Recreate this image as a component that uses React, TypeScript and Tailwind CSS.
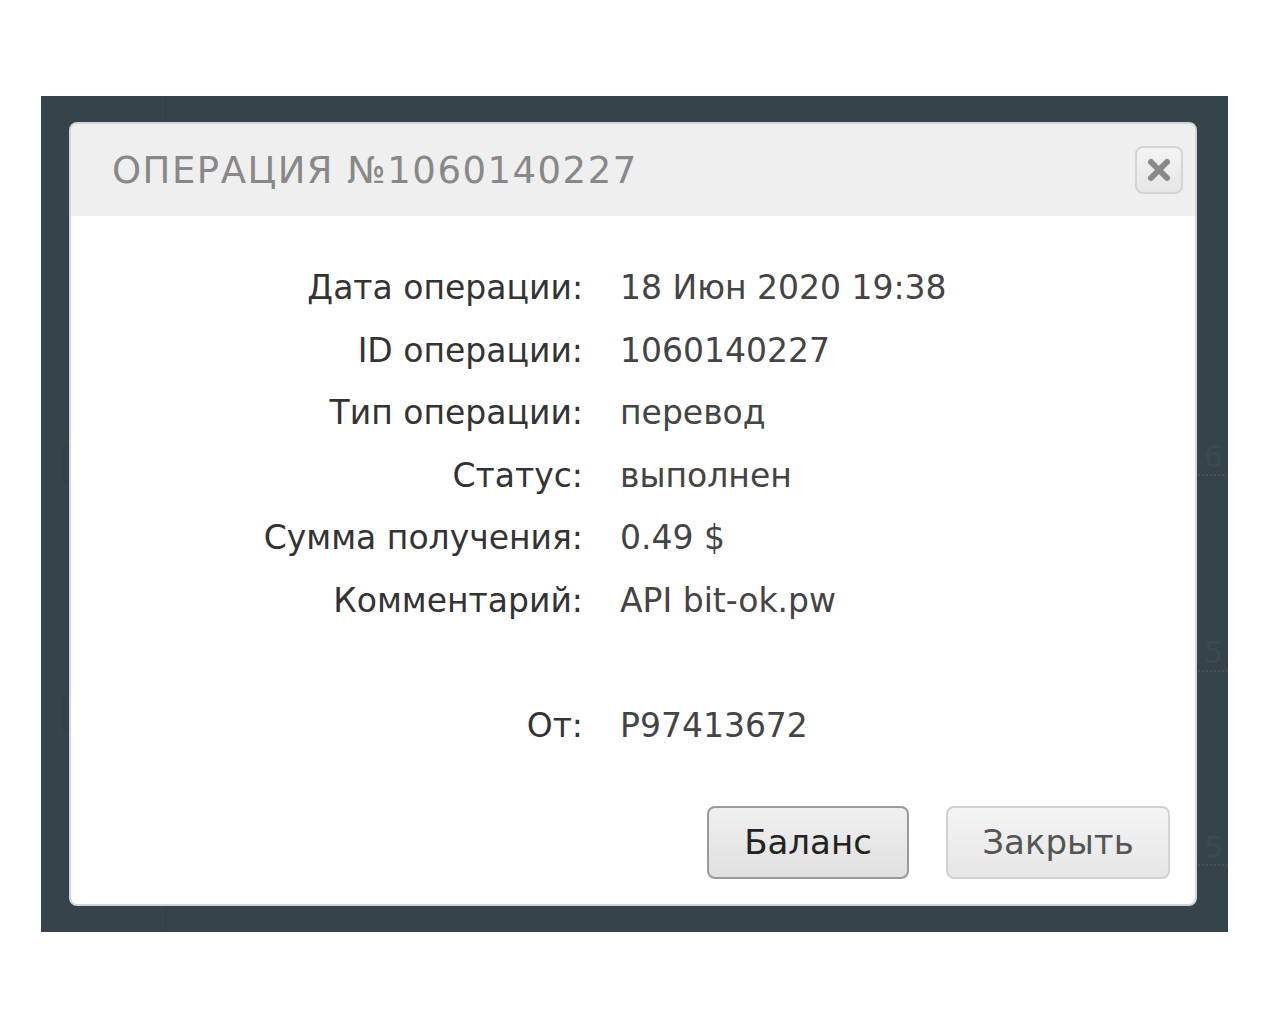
import React from 'react'

const rows: [string, string][] = [
  ['Дата операции:', '18 Июн 2020 19:38'],
  ['ID операции:', '1060140227'],
  ['Тип операции:', 'перевод'],
  ['Статус:', 'выполнен'],
  ['Сумма получения:', '0.49 $'],
  ['Комментарий:', 'API bit-ok.pw'],
]

const CloseIcon = () => (
  <svg width="26" height="26" viewBox="0 0 26 26">
    <path d="M5 5 L21 21 M21 5 L5 21" stroke="#8a8a8a" strokeWidth="6" strokeLinecap="round" />
  </svg>
)

export default function App() {
  return (
    <div className="min-h-[1024px] bg-white pt-[96px] pl-[41px]" style={{ fontFamily: '"DejaVu Sans", sans-serif' }}>
      <div className="relative w-[1187px] h-[836px] bg-[#37434b] pt-[26px] pl-[28px] overflow-hidden">
        {/* faint page content behind the overlay */}
        <div className="absolute left-[124px] top-0 w-[2px] h-full bg-[#33404a]" />
        <div className="absolute left-[22px] top-[350px] w-[12px] h-[38px] bg-[#33404a]" />
        <div className="absolute left-[22px] top-[600px] w-[12px] h-[38px] bg-[#33404a]" />
        <div className="absolute left-[1140px] top-[338px] text-[30px] text-[#3d4951] tracking-[4px]">06</div>
        <div className="absolute left-[1140px] top-[378px] w-[47px] border-t-2 border-dotted border-[#435058]" />
        <div className="absolute left-[1140px] top-[534px] text-[30px] text-[#3d4951] tracking-[4px]">05</div>
        <div className="absolute left-[1140px] top-[574px] w-[47px] border-t-2 border-dotted border-[#435058]" />
        <div className="absolute left-[1140px] top-[729px] text-[30px] text-[#3d4951] tracking-[4px]">05</div>
        <div className="absolute left-[1140px] top-[768px] w-[47px] border-t-2 border-dotted border-[#435058]" />

        <div className="relative w-[1128px] h-[784px] bg-white rounded-[8px] border-2 border-[#cfd5d9] overflow-hidden flex flex-col">
          <div className="h-[92px] bg-[#efefef] flex items-center justify-between pl-[41px] pr-[12px]">
            <h2 className="text-[37px] text-[#888] tracking-[1.5px] uppercase pt-[2px]">Операция №1060140227</h2>
            <button className="w-[48px] h-[48px] rounded-[8px] border-2 border-[#d4d4d4] bg-gradient-to-b from-[#f4f4f4] to-[#e6e6e6] flex items-center justify-center">
              <CloseIcon />
            </button>
          </div>

          <div className="flex-1 flex flex-col pt-[41px] pb-[25px] pr-[25px]">
            <div className="grid grid-cols-[512px_1fr] gap-x-[37px] text-[33px] leading-[62.5px]">
              {rows.map(([label, value]) => (
                <React.Fragment key={label}>
                  <div className="text-right text-[#333]">{label}</div>
                  <div className="text-[#444]">{value}</div>
                </React.Fragment>
              ))}
              <div className="h-[62.5px]" />
              <div />
              <div className="text-right text-[#333]">От:</div>
              <div className="text-[#444]">P97413672</div>
            </div>

            <div className="mt-auto flex justify-end gap-[37px]">
              <button className="w-[202px] h-[73px] rounded-[8px] border-2 border-[#9a9a9a] bg-gradient-to-b from-[#f0f0f0] to-[#e0e0e0] text-[34px] text-[#222]">
                Баланс
              </button>
              <button className="w-[224px] h-[73px] rounded-[8px] border-2 border-[#d2d2d2] bg-gradient-to-b from-[#f4f4f4] to-[#e6e6e6] text-[34px] text-[#555]">
                Закрыть
              </button>
            </div>
          </div>
        </div>
      </div>
    </div>
  )
}
